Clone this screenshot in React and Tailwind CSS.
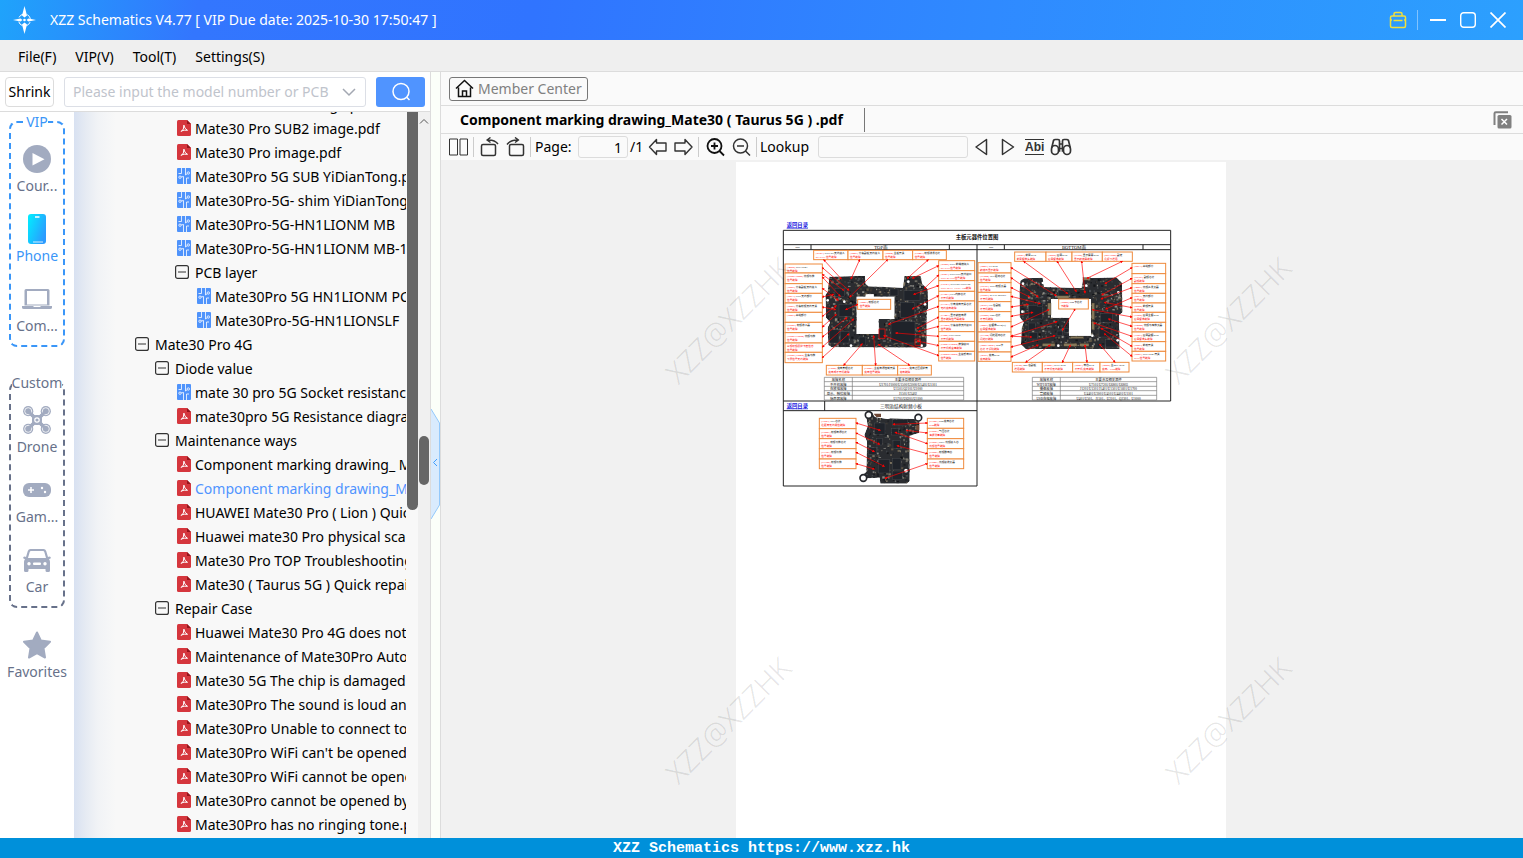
import { useState } from 'react';

const MENUS = ['File(F)', 'VIP(V)', 'Tool(T)', 'Settings(S)'];

const TREE = [
  { level: 2, type: 'pdf', name: 'Mate30 Pro SUB image.pdf' },
  { level: 2, type: 'pdf', name: 'Mate30 Pro SUB2 image.pdf' },
  { level: 2, type: 'pdf', name: 'Mate30 Pro image.pdf' },
  { level: 2, type: 'pcb', name: 'Mate30Pro 5G SUB YiDianTong.pcb' },
  { level: 2, type: 'pcb', name: 'Mate30Pro-5G- shim YiDianTong.pcb' },
  { level: 2, type: 'pcb', name: 'Mate30Pro-5G-HN1LIONM MB' },
  { level: 2, type: 'pcb', name: 'Mate30Pro-5G-HN1LIONM MB-1' },
  { level: 2, type: 'folder', name: 'PCB layer' },
  { level: 3, type: 'pcb', name: 'Mate30Pro 5G HN1LIONM PCB' },
  { level: 3, type: 'pcb', name: 'Mate30Pro-5G-HN1LIONSLF' },
  { level: 0, type: 'folder', name: 'Mate30 Pro 4G' },
  { level: 1, type: 'folder', name: 'Diode value' },
  { level: 2, type: 'pcb', name: 'mate 30 pro 5G Socket resistance' },
  { level: 2, type: 'pdf', name: 'mate30pro 5G Resistance diagram.pdf' },
  { level: 1, type: 'folder', name: 'Maintenance ways' },
  { level: 2, type: 'pdf', name: 'Component marking drawing_ Mate30 Pro.pdf' },
  { level: 2, type: 'pdf', name: 'Component marking drawing_Mate30 ( Taurus 5G ) .pdf' },
  { level: 2, type: 'pdf', name: 'HUAWEI Mate30 Pro ( Lion ) Quick repair.pdf' },
  { level: 2, type: 'pdf', name: 'Huawei mate30 Pro physical scan.pdf' },
  { level: 2, type: 'pdf', name: 'Mate30 Pro TOP Troubleshooting.pdf' },
  { level: 2, type: 'pdf', name: 'Mate30 ( Taurus 5G ) Quick repair.pdf' },
  { level: 1, type: 'folder', name: 'Repair Case' },
  { level: 2, type: 'pdf', name: 'Huawei Mate30 Pro 4G does not start.pdf' },
  { level: 2, type: 'pdf', name: 'Maintenance of Mate30Pro Auto restart.pdf' },
  { level: 2, type: 'pdf', name: 'Mate30 5G The chip is damaged.pdf' },
  { level: 2, type: 'pdf', name: 'Mate30Pro The sound is loud and small.pdf' },
  { level: 2, type: 'pdf', name: 'Mate30Pro Unable to connect to WiFi.pdf' },
  { level: 2, type: 'pdf', name: "Mate30Pro WiFi can't be opened.pdf" },
  { level: 2, type: 'pdf', name: 'Mate30Pro WiFi cannot be opened.pdf' },
  { level: 2, type: 'pdf', name: 'Mate30Pro cannot be opened by water.pdf' },
  { level: 2, type: 'pdf', name: 'Mate30Pro has no ringing tone.pdf' },
];

const INDENT = ['pl-[61px]', 'pl-[81px]', 'pl-[101px]', 'pl-[121px]'];

export default function App() {
  const [selected, setSelected] = useState(16);
  const [category, setCategory] = useState('Phone');

  return (
    <div className="flex h-screen flex-col overflow-hidden bg-white font-['Noto_Sans','Noto_Sans_CJK_SC',sans-serif] text-[14px] leading-5 text-black">
      <TitleBar />
      <nav className="flex h-8 shrink-0 items-center gap-[19px] border-b border-[#dcdcdc] bg-[#efefef] pl-[18px] pt-0.5">
        {MENUS.map((label) => (
          <button key={label} type="button">{label}</button>
        ))}
      </nav>
      <div className="flex min-h-0 flex-1">
        <aside className="flex w-[431px] shrink-0 flex-col border-r border-[#dcdcdc]">
          <SearchRow />
          <div className="flex min-h-0 flex-1">
            <Sidebar category={category} onSelect={setCategory} />
            <FileTree selected={selected} onSelect={setSelected} />
          </div>
        </aside>
        <div className="flex w-[9px] shrink-0 items-center bg-[#fbfff9]">
          <button type="button" aria-label="Collapse panel" className="mt-[18px]">
            <svg width="9" height="110" viewBox="0 0 9 110">
              <path d="M0 0 L8.500 14 V96 L0 110 Z" fill="#d9ebfd" />
              <path d="M0 0 L8.500 14 V96 L0 110" fill="none" stroke="#93c9fb" />
              <path d="M6 50 L2.500 53.500 L6 57" fill="none" stroke="#409eff" />
            </svg>
          </button>
        </div>
        <Viewer />
      </div>
      <footer className="h-5 shrink-0 bg-[#0090da] pt-px text-center font-['Liberation_Mono',monospace] text-[15px] font-bold leading-5 text-white">
        XZZ Schematics https://www.xzz.hk
      </footer>
    </div>
  );
}

function TitleBar() {
  return (
    <header className="flex h-10 shrink-0 items-center bg-[linear-gradient(100deg,#1fa3fb_0%,#3376fe_13%,#3074ff_35%,#2f8aff_65%,#2ca0fe_100%)] pl-3 pr-[17px] text-white">
      <svg width="25" height="30" viewBox="0 0 25 30" fill="#fff">
        <path d="M12.500 1 L15 10.500 L12.500 12.500 L10 10.500 Z" />
        <path d="M12.500 29 L15 19.500 L12.500 17.500 L10 19.500 Z" />
        <path d="M1 15 L8.500 13.500 L10.500 15 L8.500 16.500 Z" />
        <path d="M24 15 L16.500 13.500 L14.500 15 L16.500 16.500 Z" />
        <circle cx="12.500" cy="15" r="1.300" />
        <circle cx="12.500" cy="15" r="6" fill="none" stroke="#fff" strokeDasharray="5 4.420" strokeDashoffset="-2.200" />
      </svg>
      <h1 className="ml-[13px] flex-1 whitespace-pre">XZZ Schematics V4.77 [ VIP Due date: 2025-10-30 17:50:47 ]</h1>
      <div className="flex items-center">
        <button type="button" aria-label="Toolbox">
          <svg width="18" height="18" viewBox="0 0 18 18" fill="none" stroke="#f1e03c" strokeWidth="1.500">
            <rect x="1.500" y="5" width="15" height="11.500" rx="1.500" />
            <path d="M5 5 V3 Q5 1.500 6.500 1.500 H11.500 Q13 1.500 13 3 V5 M1.500 9 H3 M15 9 H16.500 M4.500 9.500 H13.500" />
          </svg>
        </button>
        <span className="ml-2.5 h-5 w-px bg-white/40" />
        <button type="button" aria-label="Minimize" className="ml-3">
          <svg width="16" height="16" viewBox="0 0 16 16"><rect y="7" width="16" height="2" fill="#fff" /></svg>
        </button>
        <button type="button" aria-label="Maximize" className="ml-3.5">
          <svg width="16" height="16" viewBox="0 0 16 16" fill="none" stroke="#fff" strokeWidth="1.400"><rect x="0.700" y="0.700" width="14.600" height="14.600" rx="3" /></svg>
        </button>
        <button type="button" aria-label="Close" className="ml-3.5">
          <svg width="16" height="16" viewBox="0 0 16 16" stroke="#fff" strokeWidth="1.700"><path d="M0.500 0.500 L15.500 15.500 M15.500 0.500 L0.500 15.500" /></svg>
        </button>
      </div>
    </header>
  );
}

function SearchRow() {
  return (
    <form className="flex h-10 shrink-0 items-center border-b border-[#dcdcdc] bg-white pl-[5px] pr-[5px]" onSubmit={(event) => event.preventDefault()}>
      <button type="button" className="h-[30px] w-[49px] rounded border border-[#dcdcdc]">Shrink</button>
      <label className="ml-2.5 flex h-[30px] flex-1 items-center rounded-[3px] border border-[#dcdfe6] pl-2">
        <input
          type="text"
          aria-label="Model number or PCB"
          placeholder="Please input the model number or PCB"
          className="w-0 flex-1 outline-none placeholder:text-[#bfc4cc]"
        />
        <svg className="mr-2" width="16" height="16" viewBox="0 0 16 16" fill="none" stroke="#a3a8b2" strokeWidth="1.500"><path d="M2 5 L8 11 L14 5" /></svg>
      </label>
      <button type="submit" aria-label="Search" className="ml-2.5 flex h-[30px] w-[49px] items-center justify-center rounded-[3px] bg-[#5094ff]">
        <svg width="20" height="20" viewBox="0 0 20 20" fill="none" stroke="#fff" strokeWidth="1.500"><circle cx="10" cy="9.500" r="8" /><path d="M15.500 15 L18.500 18" /></svg>
      </button>
    </form>
  );
}

function Sidebar({ category, onSelect }) {
  const item = (name, icon) => (
    <button
      type="button"
      onClick={() => onSelect(name)}
      className={`flex h-[70px] w-full flex-col items-center pt-[9px] ${category === name ? 'text-[#3a96f8]' : 'text-[#67718a]'}`}
    >
      <span className="flex h-[30px] items-center">{icon}</span>
      <span className="mt-0.5">{name}</span>
    </button>
  );

  return (
    <div className="w-[74px] shrink-0 bg-white px-[9px]">
      <fieldset className="min-w-0 rounded-lg border-2 border-dashed border-[#3a96f8] pt-[3px]">
        <legend className="mx-auto h-5 text-[#3a96f8]">VIP</legend>
        {item('Cour...', <CourseIcon />)}
        {item('Phone', <PhoneIcon />)}
        {item('Com...', <LaptopIcon />)}
      </fieldset>
      <fieldset className="mt-[26px] min-w-0 rounded-lg border-2 border-dashed border-[#67718a] pt-[3px]">
        <legend className="mx-auto h-5 text-[#67718a]">Custom</legend>
        {item('Drone', <DroneIcon />)}
        {item('Gam...', <GamepadIcon />)}
        {item('Car', <CarIcon />)}
      </fieldset>
      <div className="-mx-1 mt-[13px]">{item('Favorites', <StarIcon />)}</div>
    </div>
  );
}

function CourseIcon() {
  return (
    <svg width="28" height="28" viewBox="0 0 28 28"><circle cx="14" cy="14" r="14" fill="#a2abc0" /><path d="M9.500 8 L21.500 14.300 L9.500 20.600 Z" fill="#fff" /></svg>
  );
}

function PhoneIcon() {
  return (
    <svg width="18" height="30" viewBox="0 0 18 30">
      <defs>
        <linearGradient id="phone" x1="0" y1="0" x2="1" y2="0.600"><stop stopColor="#00f0ff" /><stop offset="1" stopColor="#2b9bff" /></linearGradient>
      </defs>
      <rect width="18" height="30" rx="3" fill="url(#phone)" />
      <path d="M7 3 H11.500" stroke="#fff" strokeWidth="1.500" />
      <path d="M5 28 H15" stroke="#fff" strokeOpacity="0.8" />
    </svg>
  );
}

function LaptopIcon() {
  return (
    <svg width="30" height="20" viewBox="0 0 30 20" fill="#a2abc0">
      <path fillRule="evenodd" d="M4 0 H26 Q27.500 0 27.500 1.500 V16.500 H2.500 V1.500 Q2.500 0 4 0 Z M5 2 V15.500 H25 V2 Z" />
      <path d="M0 17 H11 L12 18 H18 L19 17 H30 V18.500 Q30 20 28 20 H2 Q0 20 0 18.500 Z" />
    </svg>
  );
}

function DroneIcon() {
  return (
    <svg width="28" height="28" viewBox="0 0 28 28">
      <path d="M5 5 L23 23 M23 5 L5 23" stroke="#a2abc0" strokeWidth="3.500" />
      <rect x="9" y="9" width="10" height="10" rx="4" fill="#a2abc0" />
      {[[5.200, 5.200], [22.800, 5.200], [5.200, 22.800], [22.800, 22.800]].map(([x, y]) => (
        <g key={`${x}-${y}`}>
          <circle cx={x} cy={y} r="5.100" fill="#a2abc0" />
          <circle cx={x} cy={y} r="3.500" fill="none" stroke="#fff" strokeWidth="0.800" />
        </g>
      ))}
      <path d="M6 6 L11 11 M22 6 L17 11 M6 22 L11 17 M22 22 L17 17" stroke="#a2abc0" strokeWidth="3" />
      <circle cx="14" cy="14" r="2.200" fill="none" stroke="#fff" strokeWidth="1.200" />
    </svg>
  );
}

function GamepadIcon() {
  return (
    <svg width="28" height="14" viewBox="0 0 28 14">
      <rect width="28" height="14" rx="6" fill="#a2abc0" />
      <path d="M5 7 H11 M8 4 V10" stroke="#fff" strokeWidth="1.500" />
      <circle cx="19" cy="5" r="1.200" fill="#fff" />
      <circle cx="22" cy="9" r="1.200" fill="#fff" />
    </svg>
  );
}

function CarIcon() {
  return (
    <svg width="28" height="23" viewBox="0 0 28 23">
      <path fillRule="evenodd" fill="#a2abc0" d="M7.500 0 H20.500 Q22.500 0 23.200 2 L25 8 Q25.500 7.500 26.500 7.500 Q28 7.600 27.800 9 Q27.500 10 26 10 Q27 11.500 27 13 V21.500 Q27 23 25.500 23 H24 Q22.500 23 22.500 21.500 V20 H5.500 V21.500 Q5.500 23 4 23 H2.500 Q1 23 1 21.500 V13 Q1 11.500 2 10 Q0.500 10 0.200 9 Q0 7.600 1.500 7.500 Q2.500 7.500 3 8 L4.800 2 Q5.500 0 7.500 0 Z M8 2 Q7 2 6.700 3 L5 9 H23 L21.300 3 Q21 2 20 2 Z" />
      <circle cx="6" cy="14.800" r="1.700" fill="#fff" />
      <circle cx="22" cy="14.800" r="1.700" fill="#fff" />
      <rect x="10" y="13.500" width="8" height="2.500" rx="1" fill="#fff" />
    </svg>
  );
}

function StarIcon() {
  return (
    <svg width="28" height="28" viewBox="0 0 28 28" fill="#a2abc0" stroke="#a2abc0" strokeWidth="2" strokeLinejoin="round">
      <path d="M14 1.500 L17.800 9.500 L27 10.800 L20.500 17.200 L22 26.500 L14 22.200 L6 26.500 L7.500 17.200 L1 10.800 L10.200 9.500 Z" />
    </svg>
  );
}

function FileTree({ selected, onSelect }) {
  return (
    <div className="flex min-w-0 flex-1 bg-[linear-gradient(to_right,#d8e1f1_0px,#e6ebf3_12px,#f1f3f6_24px,#f8f8f8_42px)]">
      <ul className="mr-px w-0 flex-1 overflow-hidden">
        {TREE.map((node, index) => (
          <li key={node.name} className={`flex h-6 items-center ${INDENT[node.level]} ${index === 0 ? '-mt-5' : ''}`}>
            <button
              type="button"
              onClick={() => onSelect(index)}
              className={`flex h-6 items-center whitespace-nowrap ${index === selected ? 'text-[#5094ff]' : ''}`}
            >
              <NodeIcon type={node.type} />
              <span className="pt-px">{node.name}</span>
            </button>
          </li>
        ))}
      </ul>
      <div className="w-[11px] shrink-0">
        <div className="h-[398px] rounded-b-full bg-[#666]" />
      </div>
      <div className="flex w-3 shrink-0 flex-col items-center bg-[#f0f0f0]">
        <svg className="mt-1" width="10" height="10" viewBox="0 0 10 10" fill="none" stroke="#555"><path d="M1 7.500 L5 3.500 L9 7.500" /></svg>
        <div className="mt-[310px] h-[49px] w-[10px] rounded-full bg-[#666]" />
      </div>
    </div>
  );
}

function NodeIcon({ type }) {
  if (type === 'folder') {
    return (
      <svg className="mr-1.5" width="14" height="14" viewBox="0 0 14 14" fill="none" stroke="#333">
        <rect x="0.600" y="0.600" width="12.800" height="12.800" rx="2" strokeWidth="1.200" />
        <path d="M3 7 H11" />
      </svg>
    );
  }
  if (type === 'pdf') {
    return (
      <svg className="ml-0.5 mr-1" width="14" height="16" viewBox="0 0 14 16">
        <path d="M1.500 0 H10 L14 4 V14.500 Q14 16 12.500 16 H1.500 Q0 16 0 14.500 V1.500 Q0 0 1.500 0 Z" fill="#d5363d" />
        <path d="M10 0 L14 4 H10 Z" fill="#96151c" />
        <path d="M6.800 5 Q7.500 9 10.500 10.300 M6.900 5.200 Q7.300 9.500 4 11.800 M4.300 11 Q7 9.700 10.500 10.300" fill="none" stroke="#fff" />
      </svg>
    );
  }
  return (
    <svg className="ml-0.5 mr-1" width="14" height="16" viewBox="0 0 14 16">
      <rect width="14" height="16" rx="1" fill="#4f93fb" />
      <path d="M4.500 0 V5.500 H1.500 M8.500 0 V7 L10.300 5.600 M4 9 L6.500 8.500 V16 M9.500 16 V10 H12" fill="none" stroke="#fff" strokeWidth="0.800" />
      <g fill="#4f93fb" stroke="#fff" strokeWidth="0.800">
        <circle cx="11.300" cy="5" r="1.200" />
        <circle cx="3" cy="9.200" r="1.200" />
      </g>
    </svg>
  );
}

function Viewer() {
  return (
    <main className="flex min-w-0 flex-1 flex-col border-l border-[#dcdcdc] bg-[#f1f1f1]">
      <div className="flex h-[34px] shrink-0 items-center border-b border-[#dcdcdc] bg-[#fafafa] pl-2">
        <button type="button" className="flex h-6 items-center gap-1 rounded-[3px] border border-[#777] px-[5px] text-[#808080]">
          <svg width="19" height="19" viewBox="0 0 19 19" fill="none" stroke="#111" strokeWidth="1.500">
            <path d="M1 9.500 L9.500 1.500 L18 9.500 M3.500 8.500 V17.500 H15.500 V8.500 M7.500 17.500 V12 H11.500 V17.500" />
          </svg>
          Member Center
        </button>
      </div>
      <div className="flex h-7 shrink-0 items-center border-b border-[#dcdcdc] bg-[#fafafa]">
        <button type="button" className="h-6 border-r border-[#777] pl-[19px] pr-[21px] font-bold">
          Component marking drawing_Mate30 ( Taurus 5G ) .pdf
        </button>
        <button type="button" aria-label="Close all tabs" className="ml-auto mr-[11px]">
          <svg width="19" height="18" viewBox="0 0 19 18">
            <path d="M1.500 14 V2.500 Q1.500 1.200 2.800 1.200 H15" fill="none" stroke="#808080" strokeWidth="2" />
            <rect x="4.500" y="4" width="14" height="13.500" rx="1.500" fill="#808080" />
            <path d="M8.500 8 L14 13.500 M14 8 L8.500 13.500" stroke="#fff" strokeWidth="1.500" />
          </svg>
        </button>
      </div>
      <Toolbar />
      <div className="relative flex min-h-0 flex-1 justify-center overflow-hidden pr-0.5 pt-0.5">
        <article className="h-full w-[490px] bg-white pl-[39px] pt-[53px]">
          <ComponentDrawing />
        </article>
        <div className="pointer-events-none absolute inset-0 grid auto-rows-[400px] grid-cols-[500px_500px] pl-[37px] text-[29px] font-light leading-9 text-black/10" aria-hidden="true">
          {[0, 1, 2, 3].map((mark) => (
            <span key={mark} className="flex h-[320px] items-center justify-center">
              <span className="-rotate-45">XZZ@XZZHK</span>
            </span>
          ))}
        </div>
      </div>
    </main>
  );
}

function ToolButton({ label, className = '', children }) {
  return (
    <button type="button" aria-label={label} className={className}>
      <svg width="20" height="20" viewBox="0 0 20 20" fill="none" stroke="#333" strokeWidth="1.500" strokeLinejoin="round">
        {children}
      </svg>
    </button>
  );
}

function Divider() {
  return <span className="ml-1 h-5 w-px bg-[#ccc]" />;
}

function Toolbar() {
  const [page, setPage] = useState('1');
  const [keyword, setKeyword] = useState('');

  return (
    <div className="flex h-[26px] shrink-0 items-center bg-[#fafafa] pl-2">
      <ToolButton label="Two pages">
        <path d="M0.500 2 H8.500 V18 H0.500 Z M11 2 H18.500 V18 H11 Z" strokeWidth="1" />
      </ToolButton>
      <Divider />
      <ToolButton label="Rotate left" className="ml-1.5">
        <rect x="1.500" y="7.500" width="14" height="11" rx="1.500" />
        <path d="M7.500 3 Q14.500 2.500 18 7 M10.500 0.500 L7 3 L10.500 5.500" />
      </ToolButton>
      <ToolButton label="Rotate right" className="ml-1.5">
        <rect x="3.500" y="7.500" width="14" height="11" rx="1.500" />
        <path d="M12 3 Q5 2.500 1 7.500 M9 0.500 L12.500 3 L9 5.500" />
      </ToolButton>
      <Divider />
      <label htmlFor="page" className="ml-1 w-[43px]">Page:</label>
      <input
        id="page"
        value={page}
        onChange={(event) => setPage(event.target.value)}
        className="h-[22px] w-[50px] rounded-[3px] border border-[#dcdcdc] pr-[5px] text-right outline-none"
      />
      <span className="ml-0.5 w-[18px]">/1</span>
      <ToolButton label="Previous page">
        <path d="M1.500 10 L8.500 2.500 V6 H18 V14 H8.500 V17.500 Z" strokeWidth="1.400" />
      </ToolButton>
      <ToolButton label="Next page" className="ml-1.5">
        <path d="M18 10 L11 2.500 V6 H1 V14 H11 V17.500 Z" strokeWidth="1.400" />
      </ToolButton>
      <Divider />
      <ToolButton label="Zoom in" className="ml-[7px]">
        <g stroke="#111" strokeWidth="1.800"><circle cx="8.500" cy="9" r="7" /><path d="M13.500 14 L18 18.500 M5 9 H12 M8.500 5.500 V12.500" /></g>
      </ToolButton>
      <ToolButton label="Zoom out" className="ml-1.5">
        <circle cx="8.500" cy="9" r="7" />
        <path d="M13.500 14 L18 18.500 M5 9 H12" />
      </ToolButton>
      <Divider />
      <label htmlFor="lookup" className="ml-[3px] w-[58px]">Lookup</label>
      <input
        id="lookup"
        value={keyword}
        onChange={(event) => setKeyword(event.target.value)}
        className="h-[22px] w-[150px] rounded-[3px] border border-[#dcdcdc] outline-none"
      />
      <ToolButton label="Find previous" className="ml-1.5">
        <path d="M12.500 2.500 V17.500 L2 10 Z" />
      </ToolButton>
      <ToolButton label="Find next" className="ml-[7px]">
        <path d="M1.500 2.500 V17.500 L12.500 10 Z" />
      </ToolButton>
      <button type="button" aria-label="Match whole word" className="ml-1 h-4 border-y border-[#333] font-['Liberation_Sans',sans-serif] text-[12px] font-bold leading-[14px] text-[#333]">
        Abi
      </button>
      <button type="button" aria-label="Find all" className="ml-1.5">
        <svg width="22" height="20" viewBox="0 0 22 20" fill="none" stroke="#333" strokeWidth="1.700">
          <rect x="1.500" y="8.500" width="7" height="9" rx="3.500" />
          <rect x="13.500" y="8.500" width="7" height="9" rx="3.500" />
          <path d="M1.700 11 L3.500 3.500 Q4 2.500 5.500 2.500 H8 Q9.500 2.500 9.500 4 V14 H8.500 M20.300 11 L18.500 3.500 Q18 2.500 16.500 2.500 H14 Q12.500 2.500 12.500 4 V14 H13.500 M9.500 7 H12.500 M9.500 11.500 H12.500" />
        </svg>
      </button>
    </div>
  );
}

// Callout boxes: [x, y, width, height, part, name, fault]
const CALLOUTS = [
  [116, 106, 103, 28, '[J6701]', 'WIFI 5G天线接入', '5G WIFI 信号故障'],
  [219, 106, 105, 28, '[J5401]', '分集副板天线接入', '信号故障'],
  [324, 106, 89, 28, '[J6804]', '主板开关', '信号故障'],
  [413, 106, 101, 28, '[U5401]', '射频收发芯片', '信号故障'],
  [30, 147, 112, 27, '[J4602]', 'WIFI 2.4G', '信号故障'],
  [30, 174, 112, 32, '[U5201/J5202]', '低频功放', '信号故障'],
  [30, 206, 112, 29, '[J5207]', '分集副板天线接入', '信号故障'],
  [30, 235, 112, 29, '[J5213]', 'GPS 天线部分', '信号故障'],
  [30, 264, 112, 28, '[J5801]', '分集射频天线开关', '信号故障'],
  [30, 292, 112, 30, '[J5203]', '基站部分', ''],
  [30, 322, 112, 31, '[U5201]', '射频收入器', '信号故障'],
  [30, 353, 112, 31, '[U5203/U5204]', '低频功放', '信号故障'],
  [30, 384, 112, 28, '三频射频保护卡座信息', '', '信号故障'],
  [30, 412, 112, 31, '[U5801,U5802]', '主集功放', '下层信号天线故障'],
  [491, 137, 108, 30, '[J6802]', 'WIFI 前端模块入', '5G WIFI信号故障'],
  [491, 167, 108, 30, '[J6801]', 'WIFI/GPS天线接口', 'WIFI & GPS信号故障'],
  [491, 197, 108, 32, '[U5303]', 'WIFI/BT/GPS/FM', 'WIFI BLT、GPS、FM故障'],
  [491, 229, 108, 29, '[U1001]', 'UFS内存芯片', '不开机故障'],
  [491, 258, 108, 32, '[U1701]', '分离充电开关芯片', '无线充电故障'],
  [491, 290, 108, 30, '[U3401]', '显示触控电源', '显示故障信号弱故障'],
  [491, 320, 108, 30, '[U1802]', '分集接收天线接口', '信号故障'],
  [491, 350, 108, 29, '[U800]', 'CPU/DDR', '不开机故障'],
  [491, 379, 108, 30, '[U2501/U2604]', '按键接口', '不开机或音量故障'],
  [491, 409, 108, 29, '[U2502/U2504]', '主接受电口', '信号故障'],
  [154, 451, 108, 29, '[J3002]', '充电管理芯片', '充电或不开机故障'],
  [262, 451, 106, 29, '[U2201]', '主板电源控制开关', '充电信号故障'],
  [368, 451, 101, 29, '[U2301]', '充电过压保护管', '充电故障'],
  [248, 253, 99, 30, '[J4001]', '射频芯片', '信号故障'],
  [719, 111, 94, 28, '[J2601]', '前置BTB', '前置摄像头故障'],
  [813, 111, 78, 28, '[J2602]', '后置BTB', '后置摄像故障'],
  [891, 111, 91, 28, '[J1702]', '显示屏幕BTB', '显示触摸屏故障'],
  [982, 111, 90, 28, '[MIC7802]', '副麦', '免提下送话'],
  [609, 143, 99, 31, '[J2401]', 'TP BTB', '触摸与显示故障'],
  [609, 174, 99, 29, '[U7004]', 'NFC驱动芯片', '信号故障'],
  [609, 203, 99, 29, '[U5701]', 'WIFI射频大器', '信号故障'],
  [609, 232, 99, 28, '[U5203]', 'BACK BOOST', '不开机故障'],
  [609, 260, 99, 30, '[J2101]', 'I/O 右副板', '不开机故障'],
  [609, 290, 99, 30, '[U5405]', 'PMU芯片', '不开机故障'],
  [609, 320, 99, 31, '[J2201]', '后摄像BTB(N)', '后置摄像故障'],
  [609, 351, 99, 30, '[U1704]', '闪光驱动芯片', '闪光灯故障'],
  [609, 381, 99, 30, '[J2201/J2203]', 'SIM卡', '芯片 不识别故障'],
  [609, 411, 99, 28, '[J2701]', '充电BTB', '充电故障'],
  [1071, 145, 101, 31, '[J5213]', '基站部分', ''],
  [1071, 176, 101, 30, '[U5701]', '副频芯片', '副频故障'],
  [1071, 206, 101, 29, '[J4001]', '低频声发大器', '信号故障'],
  [1071, 235, 101, 29, '[J5211]', '天线部分', '信号故障'],
  [1071, 264, 101, 28, '[J5602]', '前频开关', '信号故障'],
  [1071, 292, 101, 30, '[J1802]', '后置主摄BTB', '后置摄像故障'],
  [1071, 322, 101, 29, '[U4002]', '低频功率放大器', '信号故障'],
  [1071, 351, 101, 29, '[J1803]', '后置副摄BTB', '后置摄像头故障'],
  [1071, 380, 101, 29, '[J5203]', '前射开关', '信号故障'],
  [1071, 409, 101, 29, '[J6801]', 'WIFI 2.4G开关', 'WIFI信号故障'],
  [712, 442, 90, 29, '[J2702]', 'MIC右副板', '送话故障'],
  [802, 442, 91, 29, '[U2801]', 'WIFI BTB', '不开机无线故障'],
  [893, 442, 82, 29, '[J2801]', '电池BTB', '不开机/充电故障'],
  [975, 442, 87, 29, '[J2608]', '主MIC BTB', '充电、USB故障'],
  [851, 252, 89, 30, '[J2902]', 'SIM卡芯片', '卡故障'],
  [133, 610, 110, 31, '[J7003]', 'NFC芯片', '近距离无线通信故障'],
  [133, 641, 110, 30, '[U5801]', '射频电源芯片', '信号故障'],
  [133, 671, 110, 30, '[J7801]', '射频功放芯片', '信号故障'],
  [133, 701, 110, 31, '[U7701]', '射频功放', '信号故障'],
  [133, 732, 110, 29, '[U7702]', '射频功放', '信号故障'],
  [457, 610, 109, 30, '[U7001]', 'SIM充电芯片', 'SIM故障'],
  [457, 640, 109, 31, '[U6601]', '气压芯片', '海拔测量故障'],
  [457, 671, 109, 30, '[U5601]', 'DRX 低频接入芯', '低频信号故障'],
  [457, 701, 109, 31, '[U5501]', '射频群电芯', '信号故障'],
  [457, 732, 109, 29, '[U5401]', '低频接收大器', '信号故障'],
];

const ARROWS = [
  [146, 134, 199, 192], [254, 134, 228, 192], [338, 134, 224, 246], [460, 134, 397, 190],
  [142, 158, 222, 226], [142, 178, 206, 226], [142, 186, 196, 244], [142, 220, 190, 256],
  [142, 246, 176, 238], [142, 276, 182, 284], [142, 304, 184, 272], [142, 336, 184, 298],
  [142, 366, 216, 308], [142, 396, 236, 312], [142, 428, 222, 356], [248, 268, 212, 284],
  [491, 152, 412, 190], [491, 180, 448, 220], [491, 212, 416, 238], [491, 242, 412, 282],
  [491, 274, 340, 328], [491, 306, 426, 340], [491, 334, 430, 350], [491, 364, 362, 354],
  [491, 392, 426, 378], [491, 422, 326, 362], [206, 451, 262, 386], [302, 451, 296, 362], [404, 451, 310, 388],
  [746, 139, 878, 236], [846, 139, 904, 230], [920, 139, 930, 234], [1042, 139, 936, 190],
  [708, 158, 844, 242], [708, 188, 790, 246], [708, 218, 764, 246], [708, 244, 796, 266],
  [708, 276, 760, 268], [708, 304, 774, 292], [708, 336, 822, 284], [708, 364, 846, 320],
  [708, 364, 770, 366], [708, 396, 840, 362], [708, 426, 790, 390], [900, 282, 862, 346],
  [1071, 158, 990, 206], [1071, 190, 980, 240], [1071, 218, 978, 252], [1071, 248, 992, 282],
  [1071, 278, 988, 262], [1071, 306, 952, 284], [1071, 334, 1000, 312], [1071, 364, 956, 324],
  [1071, 394, 978, 340], [1071, 424, 988, 356], [752, 442, 826, 390], [862, 442, 886, 390],
  [936, 442, 930, 390], [1020, 442, 974, 388],
  [243, 624, 316, 646], [243, 654, 314, 688], [243, 682, 298, 710], [243, 712, 328, 754],
  [243, 746, 298, 762], [457, 624, 354, 628], [457, 654, 394, 646], [457, 686, 360, 652],
  [457, 716, 366, 692], [457, 746, 330, 790],
];

const BOARDS = [
  {
    id: 'top',
    box: [150, 180, 310, 220],
    outline: 'M163 185 L270 182 L272 206 L280 214 L384 218 L388 183 L437 183 L442 207 L458 222 L460 280 L455 286 L455 394 L448 398 L170 397 L160 390 L158 340 L165 322 L153 308 L151 240 L158 230 Z M245 245 V357 H311 V312 H358 V245 H296 V238 H272 V245 Z',
    chips: [[348, 320, 72, 64], [377, 262, 42, 46], [387, 226, 48, 30], [192, 268, 40, 36], [180, 220, 28, 24], [345, 222, 24, 20], [312, 342, 18, 28], [252, 366, 20, 24], [164, 344, 28, 40], [196, 350, 26, 34]],
  },
  {
    id: 'bottom',
    box: [730, 184, 316, 222],
    outline: 'M736 197 L748 190 L803 188 L807 216 L920 219 L924 190 L1024 187 L1041 204 L1043 292 L1032 300 L1034 402 L752 402 L738 388 L740 340 L746 322 L734 306 L733 230 Z M828 252 V308 H882 V362 H948 V252 Z',
    chips: [[760, 272, 42, 40], [760, 324, 22, 22], [762, 352, 26, 20], [788, 262, 14, 12], [846, 348, 16, 14], [868, 340, 12, 12], [976, 296, 36, 26], [972, 340, 36, 26], [992, 374, 34, 22], [850, 226, 32, 18]],
  },
  {
    id: 'sub',
    box: [254, 584, 192, 224],
    outline: 'M272 592 L290 590 L300 606 L338 612 L346 610 L418 612 L434 618 L432 654 L404 662 L404 798 L396 806 L316 806 L314 788 L278 790 L268 796 L258 784 L274 770 L276 680 L268 660 L278 634 Z',
    chips: [[298, 624, 32, 34], [304, 670, 18, 20], [350, 640, 20, 20], [354, 676, 22, 24], [310, 734, 34, 40], [352, 730, 26, 34], [280, 698, 24, 20], [352, 768, 30, 26], [352, 614, 46, 18]],
  },
];

const PART_COLORS = ['#8a877b', '#0b0d10', '#75664d', '#575c61', '#9c8f72', '#15181c', '#b3b2a9', '#463f37'];

// Same pseudo random sequence on every render, so the parts never move.
function scatterParts([x, y, width, height], count) {
  let seed = x + y * 7;
  const next = () => {
    seed = (seed * 9301 + 49297) % 233280;
    return seed / 233280;
  };
  return Array.from({ length: count }, () => ({
    x: x + next() * width,
    y: y + next() * height,
    width: 2 + next() * 6,
    height: 2 + next() * 5,
    fill: PART_COLORS[Math.floor(next() * PART_COLORS.length)],
  }));
}

const PARTS = BOARDS.map((board) => scatterParts(board.box, board.id === 'sub' ? 420 : 800));

const CONNECTORS = [
  [818, 264, 10, 36], [950, 264, 9, 50], [950, 320, 9, 24], [802, 385, 38, 9], [866, 385, 40, 9],
  [914, 385, 28, 9], [886, 364, 40, 7], [924, 188, 22, 8], [846, 242, 36, 8],
];

const TABLES = [
  {
    x: 148, split: 232, right: 566,
    rows: [
      ['故障名称', '主要涉及相关器件'],
      ['不开机故障', 'U1701/J1000/U1500/U3000/U1401/U1101'],
      ['充放电故障', 'U1501/Q2101/U1000'],
      ['显示、触摸故障', 'J1501/U3402'],
      ['扬声器故障', 'U1701/U6201/U1100'],
    ],
  },
  {
    x: 772, split: 856, right: 1145,
    rows: [
      ['故障名称', '主要涉及相关器件'],
      ['WIFI/BT故障', 'U7101/U7201/U6801/U6803'],
      ['摄像故障', 'J1201/U1301/J1401/U1501/U1601/U1700'],
      ['音频故障', 'U4401/U3001/U4101/U4401/U1101'],
      ['USB充电故障', 'U401/U501、J1501、U2101、Q2301、U1000'],
    ],
  },
];

function ComponentDrawing() {
  return (
    <svg width="400" height="280" viewBox="0 0 1200 840" role="img" aria-label="主板元器件位置图" fontFamily="'Liberation Serif', 'Noto Sans CJK SC', serif">
      <defs>
        <marker id="arrow" viewBox="0 0 8 8" refX="6" refY="4" markerWidth="8" markerHeight="8" markerUnits="userSpaceOnUse" orient="auto-start-reverse">
          <path d="M0 0 L8 4 L0 8 Z" fill="#f00" />
        </marker>
        {BOARDS.map((board) => (
          <clipPath key={board.id} id={`board-${board.id}`}><path d={board.outline} clipRule="evenodd" /></clipPath>
        ))}
      </defs>

      <g fill="none" stroke="#222" strokeWidth="3">
        <path d="M25 46 H1187 V558 H25 Z M25 89 H1187 M606 89 V558 M25 558 V813 H606 V558 M25 587 H606" />
        <path d="M25 104 H1187 M108 89 V104 M523 89 V104 M688 89 V104 M1104 89 V104 M149 558 V587" />
      </g>

      <g textAnchor="middle" fontSize="14" fill="#111">
        <text x="606" y="73" fontSize="16" fontWeight="bold">主板元器件位置图</text>
        <text x="68" y="102">一</text>
        <text x="318" y="102">TOP面</text>
        <text x="648" y="102">一</text>
        <text x="897" y="102">BOTTOM面</text>
        <text x="378" y="578">三明治结构射频小板</text>
      </g>
      <g fontSize="16" fontWeight="bold" fill="#2222e0" textDecoration="underline">
        <text x="35" y="37">返回目录</text>
        <text x="35" y="578">返回目录</text>
      </g>

      {BOARDS.map((board, index) => (
        <g key={board.id} clipPath={`url(#board-${board.id})`}>
          <path d={board.outline} fill="#2a2c30" fillRule="evenodd" />
          {PARTS[index].map((part, i) => <rect key={i} {...part} fillOpacity="0.7" />)}
          {board.chips.map(([x, y, width, height]) => (
            <rect key={`${x}-${y}`} x={x} y={y} width={width} height={height} fill="#1f232a" stroke="#56595c" strokeWidth="1" />
          ))}
        </g>
      ))}
      {CONNECTORS.map(([x, y, width, height]) => (
        <rect key={`${x}-${y}`} x={x} y={y} width={width} height={height} fill="#86785a" stroke="#2c2820" />
      ))}
      <g fill="#fff" stroke="#25272c" strokeWidth="5">
        <circle cx="281" cy="600" r="10" />
        <circle cx="430" cy="608" r="10" />
        <circle cx="265" cy="789" r="10" />
        <circle cx="393" cy="767" r="8" />
      </g>
      <path d="M296 596 H318 V606 H304 Z M424 630 H433 V646 H424 Z" fill="#6e4634" />
      <g fill="#fff">
        {[[158, 256], [228, 392], [400, 200], [450, 268], [440, 392], [208, 260], [744, 206], [804, 204], [742, 290], [1030, 232], [934, 212], [952, 362], [850, 392], [1028, 376]].map(([cx, cy]) => (
          <circle key={`${cx}-${cy}`} cx={cx} cy={cy} r="4" />
        ))}
      </g>
      <path d="M312 342 H330 V370 H312 Z M420 372 H436 V392 H420 Z" fill="none" stroke="#f00" strokeWidth="2" />

      {CALLOUTS.map(([x, y, width, height, part, name, fault]) => (
        <g key={`${x}-${y}`} fontSize="8">
          <rect x={x} y={y} width={width} height={height} fill="#fff" stroke="#ef8a3c" strokeWidth="3" />
          <text x={x + 6} y={y + 12} fill="#f00">
            {part} <tspan fill="#000">{name}</tspan>
          </text>
          {fault && <text x={x + 6} y={y + 24} fill="#f00">{fault}</text>}
        </g>
      ))}

      <g stroke="#f00" strokeWidth="2">
        {ARROWS.map(([x1, y1, x2, y2]) => (
          <line key={`${x1}-${y1}-${x2}-${y2}`} x1={x1} y1={y1} x2={x2} y2={y2} markerStart="url(#arrow)" markerEnd="url(#arrow)" />
        ))}
      </g>

      {TABLES.map((table) => (
        <g key={table.x}>
          <path
            d={`M${table.x} 487 H${table.right} V555 H${table.x} Z M${table.split} 487 V555 M${table.x} 500 H${table.right} M${table.x} 514 H${table.right} M${table.x} 527 H${table.right} M${table.x} 541 H${table.right}`}
            fill="none"
            stroke="#777"
            strokeWidth="2"
          />
          {table.rows.map(([name, parts], row) => (
            <g key={row} textAnchor="middle" fontSize="10" fill="#111">
              <text x={(table.x + table.split) / 2} y={498 + row * 14}>{name}</text>
              <text x={(table.split + table.right) / 2} y={498 + row * 14}>{parts}</text>
            </g>
          ))}
        </g>
      ))}
    </svg>
  );
}
